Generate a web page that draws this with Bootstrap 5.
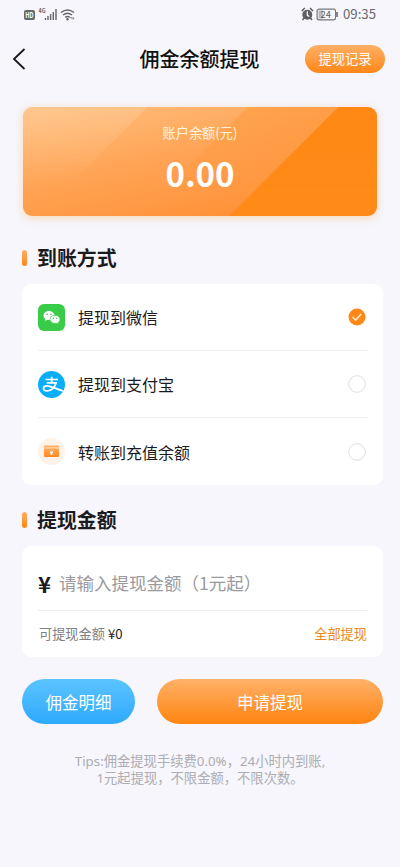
<!DOCTYPE html>
<html lang="zh-CN">
<head>
<meta charset="utf-8">
<meta name="viewport" content="width=device-width, initial-scale=1">
<title>佣金余额提现</title>
<link href="https://cdn.jsdelivr.net/npm/bootstrap@5.3.0/dist/css/bootstrap.min.css" rel="stylesheet">
<style>
body{background:#f6f6fc;font-family:"Noto Sans","Noto Sans CJK SC",sans-serif;color:#1b1b1f;min-height:867px;overflow:hidden}
.status{height:28px;padding:0 24px;color:#68686d;font:13.2px/28px "Noto Sans CJK SC",sans-serif}
.topbar{height:61px;padding:0 15px 0 12px}
.page-title{font-size:20px;font-weight:500;line-height:30px;color:#111;padding:2px 0 0 68px}
.record{width:80px;height:28px;font-size:13.3px;line-height:29px;background:linear-gradient(#ffb066,#ff8717)}
.balance{margin:18px 23px 0;height:109px;border-radius:9px;padding-top:16px;box-shadow:0 2px 8px rgba(255,170,80,.4);isolation:isolate;
background:linear-gradient(135deg,transparent 222px,#ff8a17 224px),linear-gradient(168deg,#ffc080 0%,#ffa354 45%,#ff9136 85%,#ff8b28)}
.balance::before{content:"";position:absolute;inset:0;z-index:-1;border-radius:9px;background:linear-gradient(135deg,rgba(255,225,190,.25) 87px,transparent 89px),linear-gradient(135deg,transparent 158px,rgba(255,132,14,.28) 160px);-webkit-mask-image:linear-gradient(#000,transparent 75%);mask-image:linear-gradient(#000,transparent 75%)}
.balance-label{font:13.2px/20px "Noto Sans CJK SC",sans-serif;color:#fff5df}
.balance-value{font:700 33px/50px "Noto Sans CJK SC",sans-serif;margin-top:5px}
.section-title{height:30px;font-size:19.9px;font-weight:700;padding-left:22px;gap:10px}
.section-title span{padding-top:2px}
.section-title i{width:5px;height:16px;border-radius:2.5px;background:linear-gradient(#ffad62,#ff8614)}
.panel{margin-left:22px;width:361px;border-radius:9px;padding:0 15px 0 16px}
.method{height:67px;font-size:16px;border-bottom:1px solid #eeeef2;gap:13px}
.method span{padding-top:2px}
.method:last-child{border:0}
.pick{width:18px;height:18px;margin-right:2px}
.amount{height:65px;margin-right:1px;padding-top:10px;border-bottom:1px solid #eeeef2}
.yen{font:700 22px/30px "Noto Sans CJK SC",sans-serif;width:21px}
.hint{font:17.5px/30px "Noto Sans CJK SC",sans-serif;color:#9a9a9e}
.available{height:46px;font:13.2px/20px "Noto Sans CJK SC",sans-serif;color:#808085;margin:0 1px}
.available b{font-weight:400;color:#222;margin-left:3px}
.all{color:#e88a24}
.actions{margin:22px 17px 0 22px;gap:22px}
.pill{height:45px;font-size:16.5px;line-height:47px}
.detail{width:113px;background:linear-gradient(#5bc4ff,#2ea9fc)}
.apply{background:linear-gradient(#ffb168,#ff8411)}
.tips{font-size:13.3px;line-height:17px;color:#adadb2;margin-top:29px}
</style>
<script src="https://cdn.jsdelivr.net/npm/bootstrap@5.3.0/dist/js/bootstrap.bundle.min.js"></script>
</head>
<body>
<div class="status d-flex align-items-center justify-content-between">
<svg width="54" height="18" viewBox="0 0 54 18"><rect x="0" y="5" width="11" height="10" rx="2" fill="#65656a"/><text x="1.300" y="12.700" font-size="7.500" font-weight="700" fill="#fff" textLength="8.400" lengthAdjust="spacingAndGlyphs">HD</text><text x="14.500" y="8.200" font-size="6.500" font-weight="700" fill="#65656a" textLength="7" lengthAdjust="spacingAndGlyphs">4G</text><path d="M21.500 15v-2M24 15v-4M26.600 15V9M29.300 15V7M32 15V4" stroke="#65656a" stroke-width="1.400"/><g fill="none" stroke="#65656a" stroke-width="1.500"><path d="M37 7.500q6.500-5 13 0M39 10q4.500-3.500 9 0M41.200 12.400q2.300-1.800 4.600 0"/></g><circle cx="43.500" cy="14.200" r="1.200" fill="#65656a"/><path d="M46.500 13h3.500M46.500 13l1-1M50 13l-1 1.500" stroke="#65656a" stroke-width=".8"/></svg>
<div class="d-flex align-items-center"><svg width="40" height="18" viewBox="0 0 40 18"><g transform="translate(5)"><circle cx="6.300" cy="9.800" r="5" fill="#5f5f64"/><path d="M.8 6l3-3M9 3l3 3M3 13l-1.500 2M9.500 13l1.500 2" stroke="#5f5f64" stroke-width="1.500"/><path d="M6.300 6.300v4l2 1.300" stroke="#fff" stroke-width="1.200" fill="none"/></g><rect x="22.100" y="4.200" width="14" height="0" fill="none"/><rect x="21.600" y="4.200" width="0" height="0"/><g transform="translate(4.500)"><rect x="17.100" y="4.200" width="18.500" height="10.600" rx="2" fill="none" stroke="#77777c" stroke-width="1.200" transform="translate(-.5)"/><rect x="18" y="5.500" width="4.500" height="8" fill="#b9b9bd"/><text x="20" y="12.900" font-size="9.500" fill="#5f5f64" textLength="10.500" lengthAdjust="spacingAndGlyphs">24</text></g></svg><svg width="3" height="18" viewBox="0 0 3 18"><path d="M1 7v5" stroke="#5f5f64" stroke-width="1.500"/></svg><span class="ms-1">09:35</span></div>
</div>
<header class="topbar d-flex align-items-center justify-content-between">
<svg width="14" height="24" viewBox="0 0 14 24"><path d="M12.500 2L2 12l10.500 10" fill="none" stroke="#18181b" stroke-width="1.800"/></svg>
<div class="page-title">佣金余额提现</div>
<div class="record rounded-pill text-white text-center">提现记录</div>
</header>
<section class="balance position-relative text-center text-white"><div class="balance-label">账户余额(元)</div><div class="balance-value">0.00</div></section>
<h2 class="section-title d-flex align-items-center mb-0" style="margin-top:27px"><i></i><span>到账方式</span></h2>
<section class="panel bg-white" style="margin-top:11px">
<div class="method d-flex align-items-center"><svg width="27" height="27" viewBox="0 0 27 27"><rect width="27" height="27" rx="6" fill="#38cc48"/><path d="M11 7c-3.200 0-5.500 2-5.500 4.600 0 1.500.8 2.700 2 3.500L7 17l2.200-1.200q2.500.6 4.500-.3C16 14.500 17 13 16.500 11 16 8.700 13.800 7 11 7z" fill="#fff"/><path d="M17 11.200c-2.900 0-5 1.800-5 4.100s2.100 4.200 5 4.200q1 0 1.800-.3l2 1-.5-1.700c1.100-.8 1.700-1.900 1.700-3.200 0-2.300-2.100-4.100-5-4.100z" fill="#fff" stroke="#38cc48" stroke-width=".7"/><g fill="#38cc48"><circle cx="9.200" cy="10.300" r=".8"/><circle cx="13" cy="10.300" r=".8"/><circle cx="15.400" cy="14.200" r=".7"/><circle cx="18.700" cy="14.200" r=".7"/></g></svg><span>提现到微信</span>
<svg class="pick ms-auto" viewBox="0 0 18 18"><circle cx="9" cy="9" r="8.500" fill="#ff8818"/><path d="M4.500 9l3.200 3 5.500-6" fill="none" stroke="#fff3de" stroke-width="1.400"/></svg></div>
<div class="method d-flex align-items-center"><svg width="27" height="27" viewBox="0 0 27 27"><circle cx="13.500" cy="13.500" r="13.500" fill="#0aaef8"/><path d="M7.500 8.500h12.500M13.700 5.700v6M8.700 11.800h9.500c-1 4-4.500 8.100-9 8.100-2.300 0-3.700-1-3.700-2.700 0-1.500 1.500-2.400 3.600-2.400 3.500 0 8.600 3.200 16.200 5.200" fill="none" stroke="#fff" stroke-width="1.700"/></svg><span>提现到支付宝</span>
<svg class="pick ms-auto" viewBox="0 0 18 18"><circle cx="9" cy="9" r="8.300" fill="#fff" stroke="#dedee0"/></svg></div>
<div class="method d-flex align-items-center"><svg width="27" height="27" viewBox="0 0 27 27"><defs><linearGradient id="wallet" x2="0" y2="1"><stop stop-color="#ffaa5c"/><stop offset="1" stop-color="#ff8620"/></linearGradient></defs><circle cx="13.500" cy="13.500" r="13.500" fill="#fff3e7"/><rect x="6" y="7.500" width="15" height="3" rx="1" fill="#ffad64"/><path d="M6 10h15v8q0 1-1 1H7q-1 0-1-1z" fill="url(#wallet)"/><path d="M6 10h15" stroke="#fff0dc" stroke-width=".8"/><path d="M12 12.500l1.500 1.800 1.500-1.800M13.500 14v3M11.800 14.500h3.400M11.800 16h3.400" fill="none" stroke="#fff" stroke-width=".8"/></svg><span>转账到充值余额</span>
<svg class="pick ms-auto" viewBox="0 0 18 18"><circle cx="9" cy="9" r="8.300" fill="#fff" stroke="#dedee0"/></svg></div>
</section>
<h2 class="section-title d-flex align-items-center mb-0" style="margin-top:20px"><i></i><span>提现金额</span></h2>
<section class="panel bg-white" style="margin-top:11px">
<div class="amount d-flex align-items-center"><span class="yen">¥</span><span class="hint">请输入提现金额（1元起）</span></div>
<div class="available d-flex align-items-center"><span>可提现金额</span><b>¥0</b><span class="all ms-auto">全部提现</span></div>
</section>
<div class="actions d-flex text-center text-white"><div class="pill detail rounded-pill">佣金明细</div><div class="pill apply rounded-pill flex-fill">申请提现</div></div>
<div class="tips text-center">Tips:佣金提现手续费0.0%，24小时内到账,<br>1元起提现，不限金额，不限次数。</div>
</body>
</html>
